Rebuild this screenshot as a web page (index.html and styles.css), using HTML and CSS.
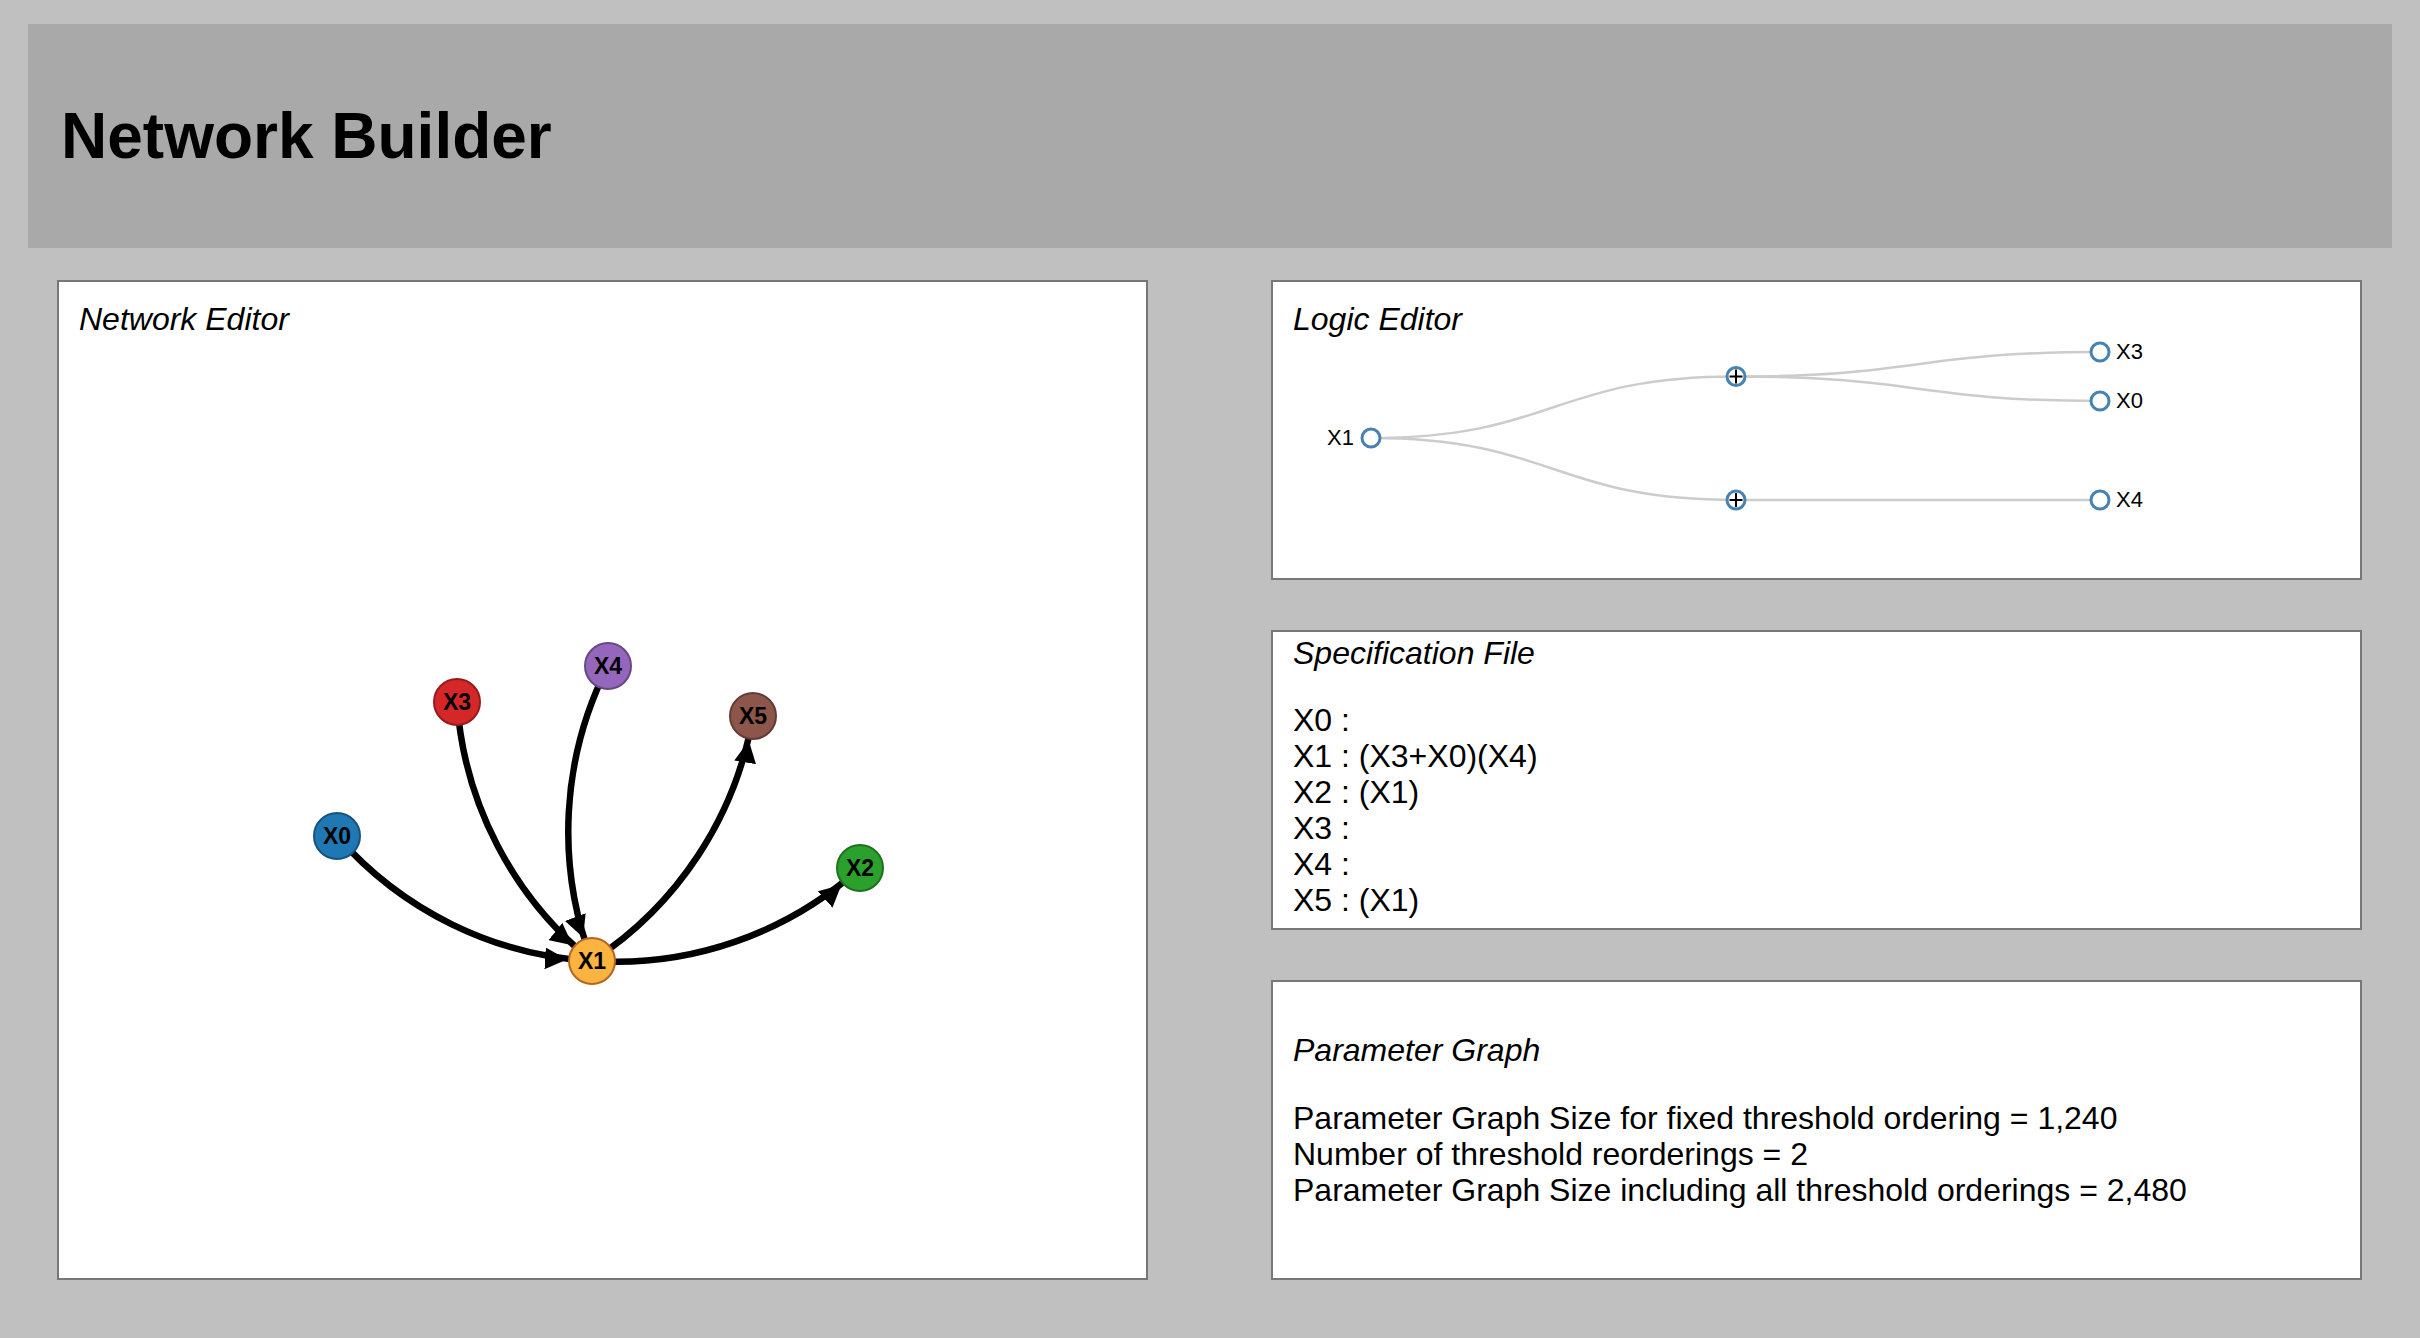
FILE: index.html
```html
<!DOCTYPE html>
<html lang="en">
<head>
<meta charset="utf-8">
<title>Network Builder</title>
<link rel="stylesheet" href="styles.css">
</head>
<body>
<header class="topbar">
  <h1 class="app-title">Network Builder</h1>
</header>
<main class="workspace">
  <section class="panel panel-network">
    <h2 class="panel-title">Network Editor</h2>
    <svg class="canvas" viewBox="0 0 1087 996" width="1087" height="996">
      <defs>
        <marker id="arrow" viewBox="0 -11 22 22" refX="47" refY="0" markerWidth="22" markerHeight="22" markerUnits="userSpaceOnUse" orient="auto">
          <path class="arrow-head" d="M0,-11L22,0L0,11Z"/>
        </marker>
      </defs>
      <g class="edges">
        <path class="edge" d="M278,554 A365,365 0 0,0 533,679" marker-end="url(#arrow)"/>
        <path class="edge" d="M398,420 A365,365 0 0,0 533,679" marker-end="url(#arrow)"/>
        <path class="edge" d="M549,384 A365,365 0 0,0 533,679" marker-end="url(#arrow)"/>
        <path class="edge" d="M533,679 A365,365 0 0,0 694,434" marker-end="url(#arrow)"/>
        <path class="edge" d="M533,679 A365,365 0 0,0 801,586" marker-end="url(#arrow)"/>
      </g>
      <g class="nodes">
        <g class="node n-x0" transform="translate(278,554)"><circle r="23"/><text dy=".36em">X0</text></g>
        <g class="node n-x3" transform="translate(398,420)"><circle r="23"/><text dy=".36em">X3</text></g>
        <g class="node n-x4" transform="translate(549,384)"><circle r="23"/><text dy=".36em">X4</text></g>
        <g class="node n-x5" transform="translate(694,434)"><circle r="23"/><text dy=".36em">X5</text></g>
        <g class="node n-x2" transform="translate(801,586)"><circle r="23"/><text dy=".36em">X2</text></g>
        <g class="node n-x1" transform="translate(533,679)"><circle r="23"/><text dy=".36em">X1</text></g>
      </g>
    </svg>
  </section>

  <div class="side">
    <section class="panel panel-logic">
      <h2 class="panel-title">Logic Editor</h2>
      <svg class="canvas" viewBox="0 0 1087 296" width="1087" height="296">
        <g class="links">
          <path class="link" d="M98,156 C280.5,156 280.5,94.5 463,94.5"/>
          <path class="link" d="M98,156 C280.5,156 280.5,218 463,218"/>
          <path class="link" d="M463,94.5 C645,94.5 645,70 827,70"/>
          <path class="link" d="M463,94.5 C645,94.5 645,119 827,119"/>
          <path class="link" d="M463,218 C645,218 645,218 827,218"/>
        </g>
        <g class="tnode" transform="translate(98,156)"><circle r="9"/><text class="lbl-left" x="-17" dy=".32em">X1</text></g>
        <g class="tnode" transform="translate(463,94.5)"><circle r="9"/><path class="plus" d="M-6.5,0H6.5M0,-7V7"/></g>
        <g class="tnode" transform="translate(463,218)"><circle r="9"/><path class="plus" d="M-6.5,0H6.5M0,-7V7"/></g>
        <g class="tnode" transform="translate(827,70)"><circle r="9"/><text class="lbl-right" x="16" dy=".32em">X3</text></g>
        <g class="tnode" transform="translate(827,119)"><circle r="9"/><text class="lbl-right" x="16" dy=".32em">X0</text></g>
        <g class="tnode" transform="translate(827,218)"><circle r="9"/><text class="lbl-right" x="16" dy=".32em">X4</text></g>
      </svg>
    </section>

    <section class="panel panel-spec">
      <h2 class="panel-title">Specification File</h2>
      <div class="text-lines">
        <div>X0 :</div>
        <div>X1 : (X3+X0)(X4)</div>
        <div>X2 : (X1)</div>
        <div>X3 :</div>
        <div>X4 :</div>
        <div>X5 : (X1)</div>
      </div>
    </section>

    <section class="panel panel-param">
      <h2 class="panel-title">Parameter Graph</h2>
      <div class="text-lines">
        <div>Parameter Graph Size for fixed threshold ordering = 1,240</div>
        <div>Number of threshold reorderings = 2</div>
        <div>Parameter Graph Size including all threshold orderings = 2,480</div>
      </div>
    </section>
  </div>
</main>
</body>
</html>
```

FILE: styles.css
```css
html, body {
  margin: 0;
}

body {
  background: #c0c0c0;
  padding: 24px 28px 58px;
  font-family: "Liberation Sans", Arial, Helvetica, sans-serif;
  color: #000;
}

.topbar {
  box-sizing: border-box;
  height: 224px;
  background: #a9a9a9;
  display: flex;
  align-items: center;
  padding-left: 33px;
}

.app-title {
  margin: 0;
  font-size: 64px;
  font-weight: bold;
  line-height: 74px;
}

.workspace {
  display: grid;
  grid-template-columns: 1fr 1fr;
  column-gap: 123px;
  padding: 32px 30px 0 29px;
}

.panel {
  position: relative;
  box-sizing: border-box;
  background: #fff;
  border: 2px solid #777;
}

.panel-network {
  height: 1000px;
}

.side {
  display: flex;
  flex-direction: column;
  gap: 50px;
}

.side .panel {
  height: 300px;
}

.panel-title {
  margin: 0;
  padding-left: 20px;
  font-size: 32px;
  font-style: italic;
  font-weight: normal;
  line-height: 36px;
}

.panel-network .panel-title,
.panel-logic .panel-title {
  padding-top: 19px;
}

.panel-spec .panel-title {
  padding-top: 3px;
}

.panel-param .panel-title {
  padding-top: 50px;
}

.text-lines {
  padding-left: 20px;
  font-size: 32px;
  line-height: 36px;
  margin-top: 31px;
}

.panel-param .text-lines {
  margin-top: 32px;
}

.canvas {
  position: absolute;
  left: 0;
  top: 0;
  width: 100%;
  height: 100%;
  overflow: visible;
}

/* network graph */
.edge {
  fill: none;
  stroke: #000;
  stroke-width: 6.5px;
}

.arrow-head {
  fill: #000;
}

.node circle {
  stroke-width: 2px;
}

.node text {
  font-family: "Liberation Sans", Arial, sans-serif;
  font-size: 23px;
  font-weight: bold;
  text-anchor: middle;
  fill: #000;
}

.n-x0 circle { fill: #1f77b4; stroke: #16537e; }
.n-x1 circle { fill: #fbb440; stroke: #b5651d; }
.n-x2 circle { fill: #2ca02c; stroke: #1f701f; }
.n-x3 circle { fill: #d62728; stroke: #961b1c; }
.n-x4 circle { fill: #9467bd; stroke: #684884; }
.n-x5 circle { fill: #8c564b; stroke: #623c35; }

/* logic tree */
.link {
  fill: none;
  stroke: #ccc;
  stroke-width: 2.5px;
}

.tnode circle {
  fill: #fff;
  stroke: #4682b4;
  stroke-width: 3px;
}

.plus {
  fill: none;
  stroke: #000;
  stroke-width: 2px;
}

.tnode text {
  font-family: "Liberation Sans", Arial, sans-serif;
  font-size: 22px;
  fill: #000;
}

.lbl-left {
  text-anchor: end;
}

.lbl-right {
  text-anchor: start;
}
```
